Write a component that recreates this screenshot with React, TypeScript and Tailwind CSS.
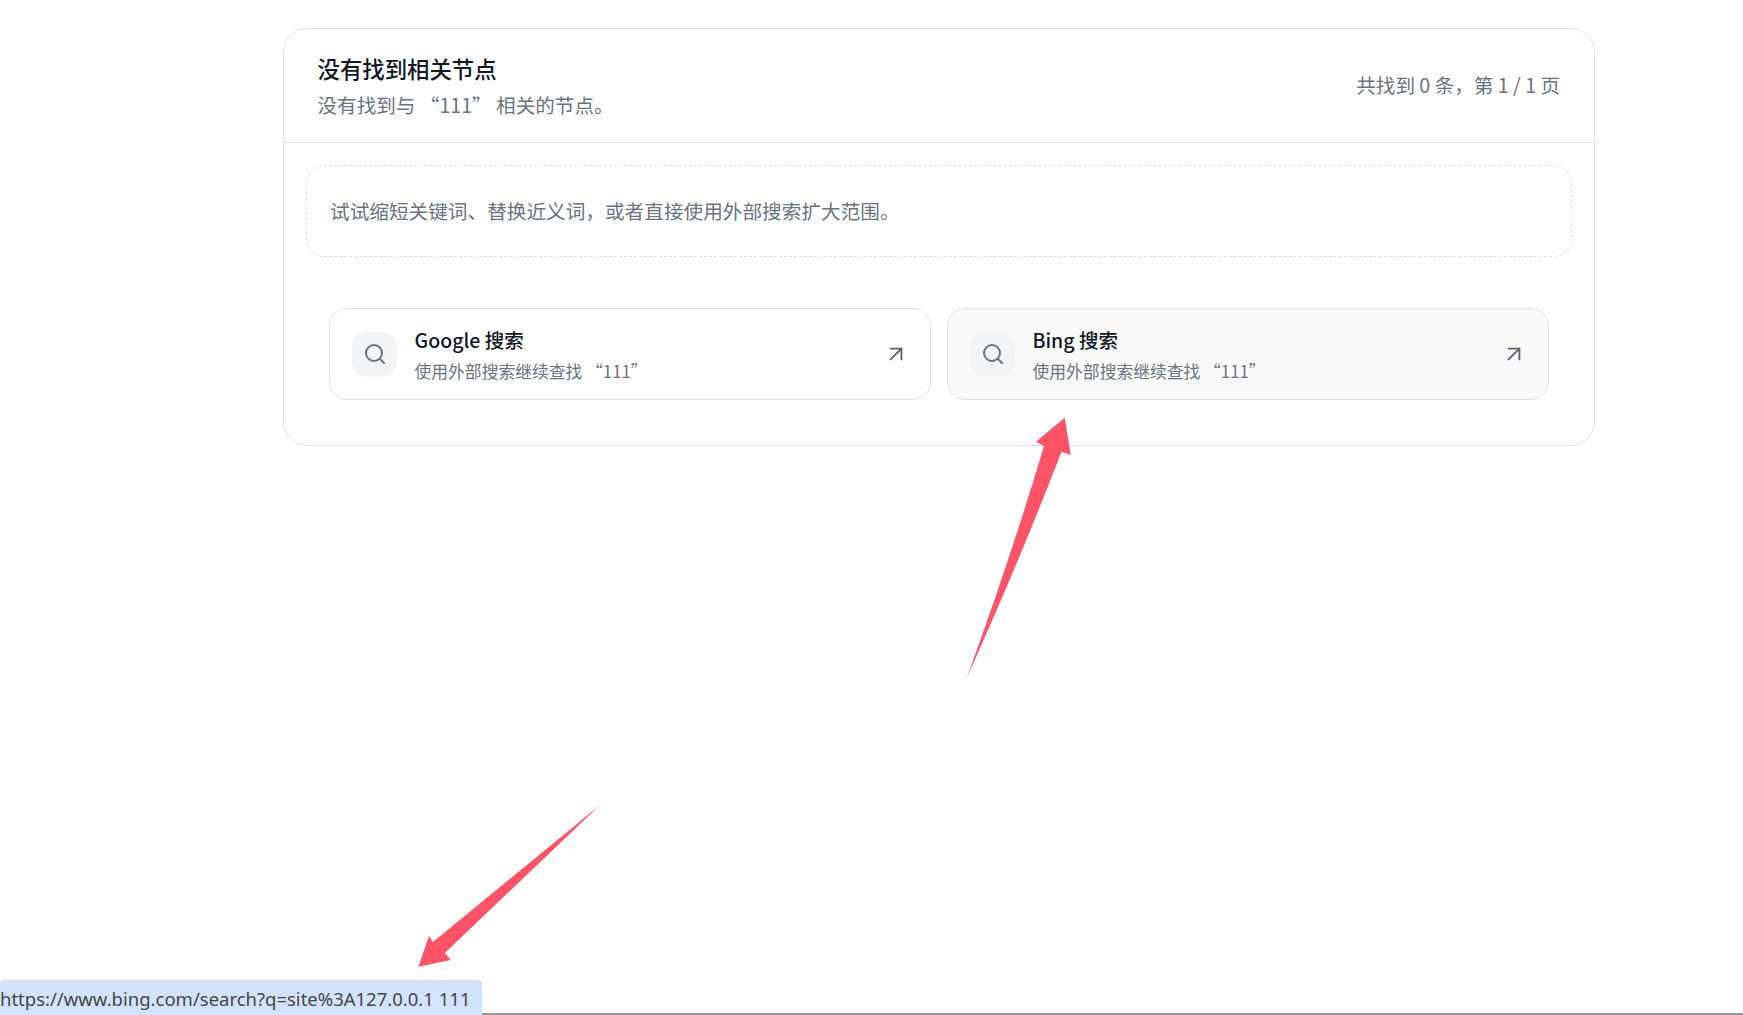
import { Search, ArrowUpRight } from "lucide-react";

const font = "font-['Noto_Sans_CJK_SC','Noto_Sans',sans-serif]";

function LinkCard({ name, hovered }: { name: string; hovered?: boolean }) {
  return (
    <div
      className={`flex h-[92px] items-center rounded-[18px] border border-[#e2e3e6] pl-[22px] pr-[21px] ${
        hovered ? "bg-[#f9f9f9]" : "bg-white"
      }`}
    >
      <div className="flex h-[45px] w-[45px] shrink-0 items-center justify-center rounded-[15px] bg-[#f3f4f6] text-[#6b7280]">
        <Search size={24} strokeWidth={2} />
      </div>
      <div className="ml-[17.5px] flex min-w-0 flex-1 flex-col">
        <div className="text-[19.5px] leading-[30px] font-medium text-[#111827]">{name} 搜索</div>
        <div className="text-[16.8px] leading-[26px] mt-[3px] text-[#6b7280]">使用外部搜索继续查找 “111”</div>
      </div>
      <ArrowUpRight size={26} strokeWidth={1.7} className="shrink-0 text-[#5b6270]" />
    </div>
  );
}

export default function App() {
  return (
    <div className={`relative h-[1015px] w-[1743px] overflow-hidden bg-white pt-[28px] ${font}`}>
      <div className="ml-[283px] w-[1312px] rounded-[24px] border border-[#e2e3e6] bg-white">
        <header className="flex h-[114px] items-center justify-between border-b border-[#e2e3e6] pl-[33.5px] pr-[34px]">
          <div className="flex flex-col">
            <h1 className="-mt-[1px] text-[22.4px] leading-[34px] font-medium text-[#111827]">没有找到相关节点</h1>
            <p className="mt-[5px] text-[19.6px] leading-[30px] text-[#6b7280]">没有找到与 “111” 相关的节点。</p>
          </div>
          <div className="-mt-[2px] text-[19.6px] text-[#6b7280]">共找到 0 条，第 1 / 1 页</div>
        </header>
        <div className="px-[22px] pt-[22px] pb-[45px]">
          <div className="flex h-[92px] items-center rounded-[18px] border border-dashed border-[#dfe1e5] pl-[23px] pr-[24px] text-[19.65px] text-[#6b7280]">
            试试缩短关键词、替换近义词，或者直接使用外部搜索扩大范围。
          </div>
          <div className="mt-[51px] grid grid-cols-2 gap-[16px] px-[23px]">
            <LinkCard name="Google" />
            <LinkCard name="Bing" hovered />
          </div>
        </div>
      </div>

      <svg className="pointer-events-none absolute inset-0" width="1743" height="1015" viewBox="0 0 1743 1015">
        <path
          d="M1064.7 417.7 L1036 441.7 L1044 446 Q1010 560 966.7 678 Q1020 560 1061.4 451.7 L1070.8 455 Z"
          fill="#ff5468"
        />
        <path
          d="M600 805 L433 942 L429 936 L418.4 966.7 L450.8 960 L444.8 953 Z"
          fill="#ff5468"
        />
      </svg>

      <div className="absolute right-0 bottom-0 left-0 h-[2px] bg-[#999999]" />
      <div className="absolute bottom-0 left-0 flex h-[35px] w-[482px] items-center rounded-t-[4px] border-t border-[#dddddd] bg-[#d3e3fd] pt-[2px] font-['Noto_Sans',sans-serif] text-[18.5px] whitespace-nowrap text-[#444746]">
        https://www.bing.com/search?q=site%3A127.0.0.1 111
      </div>
    </div>
  );
}
